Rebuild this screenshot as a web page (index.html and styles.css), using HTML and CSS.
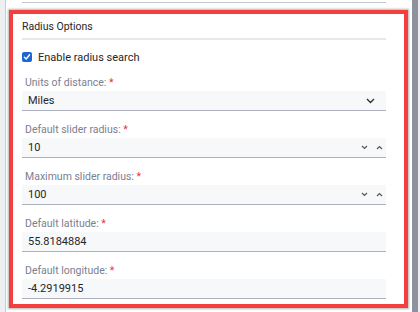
FILE: index.html
```html
<!DOCTYPE html>
<html lang="en">
<head>
    <meta charset="UTF-8">
    <title>Radius Options</title>
    <link rel="stylesheet" href="styles.css">
</head>
<body>
    <div class="page">
        <div class="prev-field"></div>
        <div class="section">
            <div class="section-title">Radius Options</div>

            <label class="check-row">
                <span class="checkbox">
                    <svg width="8" height="8" viewBox="0 0 8 8"><path d="M1.4 4.2 L3.2 6 L6.6 1.8" fill="none" stroke="#fff" stroke-width="1.4" stroke-linecap="round" stroke-linejoin="round"/></svg>
                </span>
                <span>Enable radius search</span>
            </label>

            <div class="field">
                <div class="field-label">Units of distance: <span class="req">*</span></div>
                <div class="input select">
                    <span>Miles</span>
                    <svg class="chevron" width="9" height="6" viewBox="0 0 9 6"><path d="M1 1 L4.5 4.5 L8 1" fill="none" stroke="#333" stroke-width="1.4"/></svg>
                </div>
            </div>

            <div class="field">
                <div class="field-label">Default slider radius: <span class="req">*</span></div>
                <div class="input number">
                    <span>10</span>
                    <span class="spin">
                        <svg width="7" height="5" viewBox="0 0 7 5"><path d="M1 1 L3.5 3.5 L6 1" fill="none" stroke="#555" stroke-width="1.2"/></svg>
                        <svg width="7" height="5" viewBox="0 0 7 5"><path d="M1 4 L3.5 1.5 L6 4" fill="none" stroke="#555" stroke-width="1.2"/></svg>
                    </span>
                </div>
            </div>

            <div class="field">
                <div class="field-label">Maximum slider radius: <span class="req">*</span></div>
                <div class="input number">
                    <span>100</span>
                    <span class="spin">
                        <svg width="7" height="5" viewBox="0 0 7 5"><path d="M1 1 L3.5 3.5 L6 1" fill="none" stroke="#555" stroke-width="1.2"/></svg>
                        <svg width="7" height="5" viewBox="0 0 7 5"><path d="M1 4 L3.5 1.5 L6 4" fill="none" stroke="#555" stroke-width="1.2"/></svg>
                    </span>
                </div>
            </div>

            <div class="field">
                <div class="field-label">Default latitude: <span class="req">*</span></div>
                <div class="input"><span>55.8184884</span></div>
            </div>

            <div class="field">
                <div class="field-label">Default longitude: <span class="req">*</span></div>
                <div class="input"><span>-4.2919915</span></div>
            </div>
        </div>
    </div>
    <div class="scrollbar"></div>
</body>
</html>
```

FILE: styles.css
```css
body {
    margin: 0;
    height: 312px;
    overflow: hidden;
    display: flex;
    background-color: #eeeff1;
    font-family: Roboto, "Liberation Sans", Arial, sans-serif;
    color: #262626;
}
.page {
    margin-left: 5px;
    border-left: 1px solid #c9ccd2;
    background-color: #fff;
    padding: 0 4px 0 3px;
    width: 399px;
}
.prev-field {
    height: 2px;
    margin: 0 22px 7px 13px;
    border-bottom: 1px solid #c3c7d0;
}
.section {
    border: 4px solid #f3403f;
    box-shadow: 0 0 2px 1px rgba(0,0,0,0.3);
    padding: 0 18px 0 9px;
    height: 298px;
    box-sizing: border-box;
}
.section-title {
    font-size: 10.5px;
    line-height: 14px;
    padding: 6px 0 4px;
    border-bottom: 2px solid #e8e8e8;
}
.check-row {
    display: flex;
    align-items: center;
    gap: 6px;
    margin-top: 10px;
    height: 14px;
    font-size: 11px;
}
.checkbox {
    width: 10px;
    height: 10px;
    border-radius: 2px;
    background-color: #1b66d2;
    display: flex;
    align-items: center;
    justify-content: center;
}
.field {
    margin-top: 12px;
}
.field-label {
    font-size: 10.5px;
    line-height: 14px;
    color: #7a8091;
    padding-left: 3px;
    margin-bottom: 1px;
}
.req {
    color: #e3353b;
}
.input {
    height: 19px;
    background-color: #f7f8fa;
    border-bottom: 1px solid #adb1bd;
    display: flex;
    align-items: center;
    justify-content: space-between;
    padding: 0 6px;
    font-size: 11px;
}
.select {
    padding-right: 11px;
}
.number {
    padding-right: 3px;
}
.spin {
    display: flex;
    gap: 8px;
}
.scrollbar {
    width: 6px;
    margin-right: 2px;
    background-color: #8d929e;
}
```
